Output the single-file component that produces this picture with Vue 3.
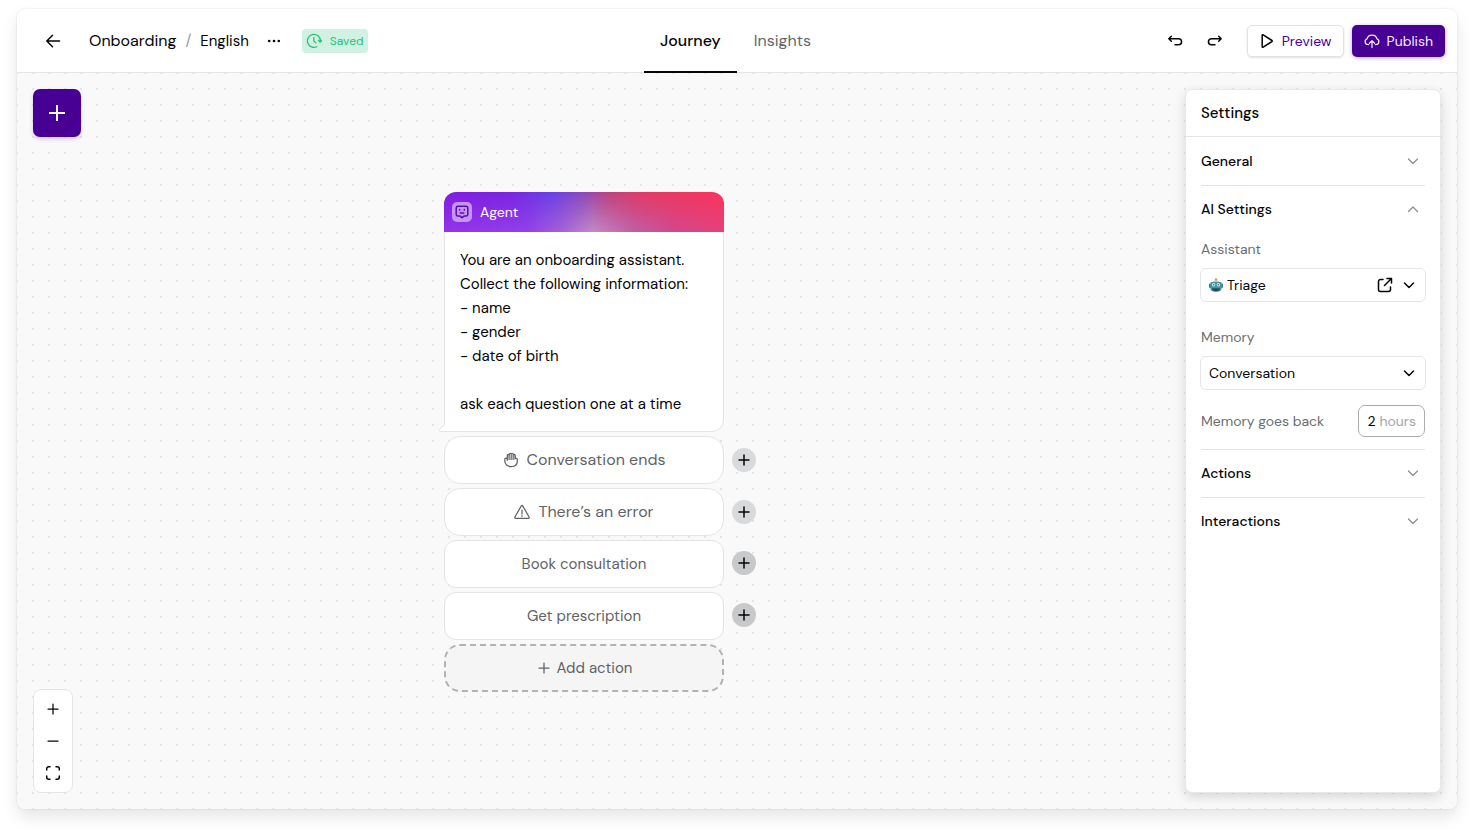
<script setup>
import { ref } from 'vue'

const tabs = ['Journey', 'Insights']
const activeTab = ref('Journey')
const assistant = ref('Triage')
const memory = ref('Conversation')
const memoryHours = ref('2')

const prompt = `You are an onboarding assistant.
Collect the following information:
- name
- gender
- date of birth

ask each question one at a time`

const exits = [
  { label: 'Conversation ends', icon: 'hand', system: true },
  { label: 'There’s an error', icon: 'warning', system: true },
  { label: 'Book consultation' },
  { label: 'Get prescription' },
]
</script>

<template>
  <div class="page">
    <div class="frame">
      <header class="topbar">
        <div class="crumbs">
          <button class="icon-btn back" aria-label="Back">
            <svg width="16" height="16" viewBox="0 0 16 16" class="line bold"><path d="M14.500 8H2M7.500 2.300 1.800 8l5.700 5.700" /></svg>
          </button>
          <nav class="trail" aria-label="Breadcrumb">
            <a class="journey-name" href="#">Onboarding</a>
            <span class="slash">/</span>
            <a href="#">English</a>
          </nav>
          <button class="icon-btn more" aria-label="More options">
            <svg width="16" height="16" viewBox="0 0 16 16" fill="currentColor"><circle cx="3.200" cy="8" r="1.300" /><circle cx="8" cy="8" r="1.300" /><circle cx="12.800" cy="8" r="1.300" /></svg>
          </button>
          <span class="saved">
            <svg width="16" height="16" viewBox="0 0 16 16" class="line"><path d="M10.800 13.700A6.500 6.500 0 1 1 14.400 7.600M12.400 7.300l1.900 1.900 1.500-2M7.800 4.500V8l2.200 1.900" /></svg>
            Saved
          </span>
        </div>

        <nav class="tabs" aria-label="Views">
          <button
            v-for="tab in tabs"
            :key="tab"
            class="tab"
            :class="{ active: activeTab === tab }"
            @click="activeTab = tab"
          >{{ tab }}</button>
        </nav>

        <div class="tools">
          <button class="icon-btn" aria-label="Undo">
            <svg width="16" height="16" viewBox="0 0 16 16" class="line bold"><path d="M4.300 3.200 1.800 5.700l2.500 2.500M2 5.700h9.500a2.800 2.800 0 0 1 0 6.100H8" /></svg>
          </button>
          <button class="icon-btn" aria-label="Redo">
            <svg width="16" height="16" viewBox="0 0 16 16" class="line bold"><path d="m11.700 3.200 2.500 2.500-2.500 2.500M14 5.700H4.500a2.800 2.800 0 0 0 0 6.100H8" /></svg>
          </button>
          <button class="btn preview">
            <svg width="16" height="16" viewBox="0 0 16 16" class="line bold"><path d="M3.200 2.300v11.400c0 .6.500.8 1 .5l8.800-5.700c.4-.3.400-.7 0-1L4.200 1.800c-.5-.3-1-.1-1 .5Z" /></svg>
            Preview
          </button>
          <button class="btn publish">
            <svg width="16" height="16" viewBox="0 0 16 16" class="line"><path d="M4.600 11.500H3.900A2.900 2.900 0 0 1 3 5.900C3.600 3.500 5.500 2 8 2c2.600 0 4.500 1.600 5 3.900a2.900 2.900 0 0 1-.9 5.600h-.7M8 14.500V8M5.400 10.300 8 7.700l2.600 2.600" /></svg>
            Publish
          </button>
        </div>
      </header>

      <main class="canvas">
        <div class="rail">
          <button class="add-node" aria-label="Add node">
            <svg width="24" height="24" viewBox="0 0 24 24"><path d="M4 12h16M12 4v16" stroke="currentColor" stroke-width="2" /></svg>
          </button>
          <div class="zoom">
            <button aria-label="Zoom in"><svg width="16" height="16" viewBox="0 0 16 16" class="line"><path d="M8 3v10M3 8h10" /></svg></button>
            <button aria-label="Zoom out"><svg width="16" height="16" viewBox="0 0 16 16" class="line"><path d="M3 8h10" /></svg></button>
            <button aria-label="Fit to screen"><svg width="16" height="16" viewBox="0 0 16 16" class="line bold"><path d="M1.700 5V3.700a2 2 0 0 1 2-2H5M11 1.700h1.300a2 2 0 0 1 2 2V5M14.300 11v1.300a2 2 0 0 1-2 2H11M5 14.300H3.700a2 2 0 0 1-2-2V11" /></svg></button>
          </div>
        </div>

        <section class="node" aria-label="Agent">
          <article class="agent">
            <header class="agent-head">
              <span class="badge">
                <svg width="16" height="16" viewBox="0 0 16 16" class="line bold"><path d="M4 2.300h8c1.200 0 1.800.7 1.800 1.600v6.600c0 1-.6 1.600-1.800 1.600h-2L8 13.700l-2-1.600H4c-1.200 0-1.800-.7-1.800-1.600V3.900c0-1 .6-1.600 1.800-1.600Z" /><path d="M6.300 9h3.400M5.700 5.500v.6M10.300 5.500v.6" /></svg>
              </span>
              <span>Agent</span>
            </header>
            <p class="prompt">{{ prompt }}</p>
            <svg class="tail" width="8" height="16" viewBox="0 0 8 16"><path class="tail-fill" d="M8 0H6.500v9L2 12.600C.6 13.800 1 15.500 2.600 15.500H8Z" /><path class="tail-line" d="M6.500 0v9L2 12.600C.6 13.800 1 15.500 2.600 15.500H8" /></svg>
          </article>

          <div v-for="exit in exits" :key="exit.label" class="exit-row">
            <button class="exit" :class="{ system: exit.system }">
              <svg v-if="exit.icon === 'hand'" width="16" height="16" viewBox="0 0 16 16" class="line"><path class="fingers" d="M4.500 3h7.500v5H4.500Z" /><path d="M4.300 8.300V3.600c0-1.100 1.300-1.400 1.900-.8.300-1.400 1.700-1.600 2.200-1 .6-.6 1.900-.4 2 .9.700-.5 1.900-.2 1.900 1v3c.6-.8 2-.3 2 .9v1.700c0 3.200-2.400 5.300-6.100 5.300s-6.400-2.200-6.400-5.500V7.300c0-1.300 2-1.500 2.500-.2" /><path class="creases" d="M6.200 3.500v4M8.300 2.500v5M10.300 3.500v4" /></svg>
              <svg v-if="exit.icon === 'warning'" width="16" height="16" viewBox="0 0 16 16" class="line"><path d="M7.300 1.900.9 13c-.4.600 0 1.300.7 1.300h12.800c.7 0 1.100-.7.700-1.300L8.700 1.900c-.3-.6-1.100-.6-1.400 0ZM8 6v4M8 11.700v.6" /></svg>
              {{ exit.label }}
            </button>
            <button class="connect" :class="{ system: exit.system }" :aria-label="'Connect ' + exit.label">
              <svg width="16" height="16" viewBox="0 0 16 16" class="line bold"><path d="M8 3v10M3 8h10" /></svg>
            </button>
          </div>

          <button class="add-action">
            <svg width="16" height="16" viewBox="0 0 16 16" class="line"><path d="M8 3v10M3 8h10" /></svg>
            Add action
          </button>
        </section>

        <aside class="settings">
          <h2>Settings</h2>
          <div class="groups">
            <section class="group">
              <button class="group-head" aria-expanded="false">
                General
                <svg width="16" height="16" viewBox="0 0 16 16" class="line"><path d="M3.500 6 8 10.500 12.500 6" /></svg>
              </button>
            </section>

            <section class="group">
              <button class="group-head" aria-expanded="true">
                AI Settings
                <svg width="16" height="16" viewBox="0 0 16 16" class="line"><path d="M3.500 10.500 8 6l4.500 4.500" /></svg>
              </button>
              <div class="fields">
                <div class="field">
                  <label for="assistant">Assistant</label>
                  <div class="control">
                    <svg class="robot" width="14" height="14" viewBox="0 0 14 14">
                      <path d="M7 1v3" stroke="#8b6a55" />
                      <circle cx="7" cy="1.400" r="1.200" fill="#f58a3c" />
                      <path d="M3 4.500c1-2.200 7-2.200 8 0Z" fill="#b9c6cc" />
                      <rect x="0" y="5.500" width="2" height="4.500" rx="1" fill="#586b73" />
                      <rect x="12" y="5.500" width="2" height="4.500" rx="1" fill="#586b73" />
                      <path d="M1.700 4h10.600c.9 3.500.8 6.500-.4 8.600-2.400 1.700-7.400 1.700-9.800 0-1.200-2.100-1.300-5.100-.4-8.600Z" fill="#3d9aa8" />
                      <circle cx="4.600" cy="6.800" r="1.700" fill="#b8eef0" /><circle cx="9.400" cy="6.800" r="1.700" fill="#b8eef0" />
                      <circle cx="4.600" cy="6.800" r=".8" fill="#b34736" /><circle cx="9.400" cy="6.800" r=".8" fill="#b34736" />
                      <path d="M3.300 10.300h7.400v1.900c-2 1-5.400 1-7.400 0Z" fill="#29484f" />
                    </svg>
                    <select id="assistant" v-model="assistant"><option>Triage</option></select>
                    <a class="open" href="#" aria-label="Open assistant">
                      <svg width="16" height="16" viewBox="0 0 16 16" class="line bold"><path d="M6 2.500H3.500a2 2 0 0 0-2 2v8c0 1.100.9 2 2 2h8a2 2 0 0 0 2-2V10M10 1.500h4.500V6M14.200 1.800 7.500 8.500" /></svg>
                    </a>
                    <svg width="16" height="16" viewBox="0 0 16 16" class="line bold"><path d="m3.500 6 4.500 4.500L12.500 6" /></svg>
                  </div>
                </div>
                <div class="field">
                  <label for="memory">Memory</label>
                  <div class="control">
                    <select id="memory" v-model="memory"><option>Conversation</option></select>
                    <svg width="16" height="16" viewBox="0 0 16 16" class="line bold"><path d="m3.500 6 4.500 4.500L12.500 6" /></svg>
                  </div>
                </div>
                <div class="span-row">
                  <label for="hours">Memory goes back</label>
                  <span class="hours"><input id="hours" v-model="memoryHours" type="text" inputmode="numeric" />hours</span>
                </div>
              </div>
            </section>

            <section v-for="name in ['Actions', 'Interactions']" :key="name" class="group">
              <button class="group-head" aria-expanded="false">
                {{ name }}
                <svg width="16" height="16" viewBox="0 0 16 16" class="line"><path d="M3.500 6 8 10.500 12.500 6" /></svg>
              </button>
            </section>
          </div>
        </aside>
      </main>
    </div>
  </div>
</template>

<style>
body { background: #fff; }
</style>

<style scoped>
.page, .page * { box-sizing: border-box; }
.page {
  display: flex;
  min-height: 100vh;
  padding: 9px 17px 25px;
  font: 400 14px/24px "DM Sans", Inter, sans-serif;
  color: #050506;
}
button, input, select { font: inherit; color: inherit; background: none; border: 0; padding: 0; margin: 0; }
button { cursor: pointer; }
a { color: inherit; text-decoration: none; }
svg { display: block; flex: none; }
.line { fill: none; stroke: currentColor; stroke-width: 1.25; stroke-linecap: round; stroke-linejoin: round; }
.line.bold { stroke-width: 1.5; }

.frame {
  flex: 1;
  display: flex;
  flex-direction: column;
  border-radius: 8px;
  background: #fff;
  box-shadow: 0 0 2px rgba(0, 0, 0, .12), 0 8px 16px rgba(0, 0, 0, .1);
}
.topbar {
  display: grid;
  grid-template-columns: 1fr auto 1fr;
  height: 64px;
  border-bottom: 1px solid #e4e4e5;
}
.crumbs, .trail, .tools, .saved, .btn, .icon-btn { display: flex; align-items: center; }
.icon-btn { justify-content: center; width: 32px; height: 32px; }
.crumbs { padding-left: 20px; }
.trail { gap: 9px; margin-left: 20px; font-size: 15px; }
.journey-name { font-size: 16px; }
.slash { color: #97999c; }
.more { margin-left: 9px; }
.saved {
  gap: 8px;
  height: 24px;
  margin-left: 12px;
  padding: 0 5px 0 4px;
  border-radius: 4px;
  background: #d1f2e2;
  color: #25c277;
  font-size: 12px;
}
.tabs { display: flex; gap: 1px; padding-right: 3px; }
.tab { padding: 2px 16px 0; font-size: 16px; color: #636769; margin-bottom: -1px; border-bottom: 2px solid transparent; }
.tab.active { color: #050506; font-weight: 500; border-color: #050506; }
.tools { justify-content: flex-end; gap: 8px; padding-right: 12px; }
.btn { gap: 6px; height: 32px; padding: 0 12px; border-radius: 5px; font-size: 14px; }
.preview {
  margin-left: 8px;
  padding: 0 11px;
  color: #4b0096;
  border: 1px solid #e2e2e4;
  box-shadow: 0 1px 2px rgba(0, 0, 0, .12);
}
.btn.preview, .btn.publish { gap: 7px; }
.preview svg { color: #050506; }
.publish { color: #f3ecfb; background: #480094; box-shadow: 0 1px 4px rgba(72, 0, 148, .35); }

.canvas {
  position: relative;
  flex: 1;
  display: flex;
  justify-content: space-between;
  padding: 16px;
  border-radius: 0 0 8px 8px;
  background-color: #f9f9f9;
  background-image: linear-gradient(90deg, transparent 2px, #f9f9f9 2px), linear-gradient(#e4e4e4 2px, transparent 2px);
  background-size: 16px 16px;
  background-position: 15px 15px;
}
.rail { display: flex; flex-direction: column; justify-content: space-between; align-items: flex-start; }
.add-node {
  display: grid;
  place-items: center;
  width: 48px;
  height: 48px;
  border-radius: 7px;
  color: #fff;
  background: #480094;
  box-shadow: 0 2px 4px rgba(72, 0, 148, .2);
}
.zoom { width: 40px; padding: 3px 0; border: 1px solid #e6e6e7; border-radius: 8px; background: #fff; }
.zoom button { display: grid; place-items: center; width: 100%; height: 32px; }

.node { position: absolute; left: 427px; top: 119px; width: 280px; display: flex; flex-direction: column; gap: 4px; }
.agent { position: relative; border: 1px solid #e4e4e6; border-radius: 12px 12px 12px 0; background: #fff; }
.agent-head {
  position: relative;
  display: flex;
  align-items: center;
  gap: 8px;
  height: 40px;
  margin: -1px -1px 0;
  padding: 0 8px;
  border-radius: 12px 12px 0 0;
  overflow: hidden;
  color: #fff;
  font-size: 14px;
  background: linear-gradient(94deg, #811de0 0, #7b25e3 24%, #6a40e6 38%, #8a48be 49%, #bd4180 58%, #e23a66 70%, #fb345d 100%);
}
.agent-head::before {
  content: "";
  position: absolute;
  inset: 0;
  background: linear-gradient(90deg, #9432ea 0, #9240e8 30%, #a562d8 42%, #c28ac8 53%, #bf5ea6 68%, #d2488c 82%, #e5407a 100%);
  mask-image: linear-gradient(transparent, #000);
}
.agent-head > * { position: relative; }
.badge { display: grid; place-items: center; width: 20px; height: 20px; border-radius: 5px; background: #c594f2; color: #5a0bac; }
.prompt { margin: 0; padding: 16px 15px 15px; white-space: pre-line; font-size: 15px; line-height: 24px; }
.tail { position: absolute; left: -7px; bottom: -1px; }
.tail-fill { fill: #fff; }
.tail-line { fill: none; stroke: #e4e4e6; }
.exit-row { position: relative; }
.exit, .add-action {
  display: flex;
  align-items: center;
  justify-content: center;
  gap: 8px;
  width: 100%;
  height: 48px;
  border: 1px solid #e4e4e6;
  border-radius: 12px;
  background: #fff;
  color: #5f6366;
  font-size: 15px;
}
.exit.system { border-radius: 16px; font-size: 16px; }
.fingers { fill: #c4c6c8; stroke: none; }
.creases { stroke-width: .8; }
.add-action { gap: 5px; border: 2px dashed #b0b2b3; border-radius: 16px; background: #f5f5f5; }
.connect {
  position: absolute;
  left: 288px;
  top: 11px;
  display: grid;
  place-items: center;
  width: 24px;
  height: 24px;
  border-radius: 50%;
  background: #c8c9cb;
}
.connect.system { top: 12px; background: #d9dadc; }

.settings {
  width: 256px;
  border: 1px solid #e8e8e9;
  border-radius: 7px;
  background: #fff;
  box-shadow: 0 4px 12px rgba(0, 0, 0, .14);
}
.settings h2 { margin: 0; padding: 11px 15px; border-bottom: 1px solid #e4e4e6; font-size: 15px; line-height: 24px; font-weight: 500; }
.groups { padding: 0 15px; }
.group + .group { border-top: 1px solid #e4e4e6; }
.group-head { display: flex; align-items: center; justify-content: space-between; width: 100%; height: 48px; padding-right: 4px; font-size: 14px; font-weight: 500; }
.group + .group .group-head { height: 47px; padding-bottom: 1px; }
.group-head svg { color: #8b8f92; }
.fields { padding: 4px 0 12px; }
.field { display: flex; flex-direction: column; gap: 7px; margin-bottom: 23px; }
.field + .field { margin-bottom: 15px; }
label { color: #6a6e71; font-size: 14px; line-height: 24px; }
.control { display: flex; align-items: center; gap: 8px; height: 34px; margin: 0 -1px; padding: 0 8px; border: 1px solid #e6e6e7; border-radius: 6px; }
.robot { margin-right: -4px; }
select { flex: 1; min-width: 0; appearance: none; font-size: 14px; outline: none; }
.span-row { display: flex; align-items: center; justify-content: space-between; }
.hours { display: flex; align-items: center; gap: 3px; height: 32px; padding: 0 8px; border: 1px solid #a9acae; border-radius: 7px; color: #a4a6a8; }
.hours input { width: 9px; color: #050506; outline: none; }
</style>
